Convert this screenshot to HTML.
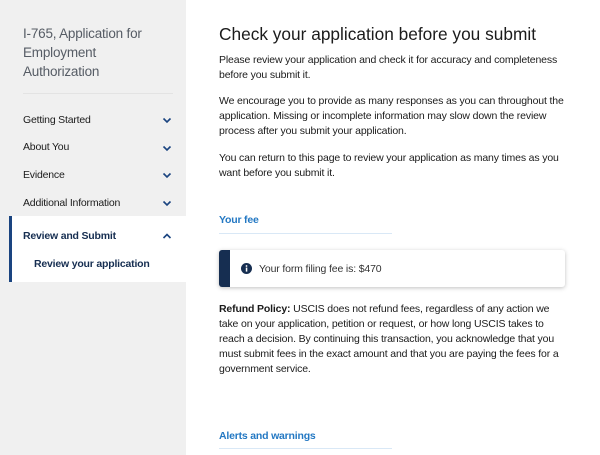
<!DOCTYPE html>
<html><head><style>
*{margin:0;padding:0;box-sizing:border-box}
body{width:600px;height:455px;overflow:hidden;background:#fff;font-family:"Liberation Sans",sans-serif;color:#1b1b1b;position:relative}
.side{position:absolute;left:0;top:0;width:186px;height:455px;background:#f0f0f0}
.t{position:absolute;white-space:nowrap}
.title{left:23px;font-size:13.5px;color:#565c65;letter-spacing:-0.2px}
.nav{left:23px;font-size:10.5px;color:#1b1b1b;letter-spacing:-0.2px}
.chev{position:absolute;left:162px;width:10px;height:7px}
.active{position:absolute;left:9px;top:216px;width:177px;height:66px;background:#fff;border-left:3px solid #1a4480}
.p{left:219px;font-size:10.5px;color:#1b1b1b;letter-spacing:-0.15px}
.h{left:219px;font-size:17.3px;color:#1b1b1b;letter-spacing:0}
.sec{left:219px;font-size:10.5px;font-weight:bold;color:#2378c3;letter-spacing:-0.2px}
.rule{position:absolute;left:219px;width:173px;height:1px;background:#d9e8f6}
.alert{position:absolute;left:219px;top:250px;width:346px;height:37px;background:#fff;border-radius:3px;box-shadow:0 1px 4px rgba(0,0,0,.25);border-left:11px solid #162e51}
</style></head><body>
<div class="side"></div>
<div class="t title" style="top:26px">I-765, Application for</div>
<div class="t title" style="top:45px">Employment</div>
<div class="t title" style="top:64px">Authorization</div>
<div style="position:absolute;left:23px;top:93px;width:150px;height:1px;background:#e3e3e3"></div>
<div class="t nav" style="top:114px">Getting Started</div>
<div class="t nav" style="top:141px">About You</div>
<div class="t nav" style="top:169px">Evidence</div>
<div class="t nav" style="top:197px">Additional Information</div>
<svg class="chev" style="top:117px" viewBox="0 0 10 7"><path d="M1.5 1.5 5 5 8.5 1.5" fill="none" stroke="#1a4480" stroke-width="1.6"/></svg>
<svg class="chev" style="top:145px" viewBox="0 0 10 7"><path d="M1.5 1.5 5 5 8.5 1.5" fill="none" stroke="#1a4480" stroke-width="1.6"/></svg>
<svg class="chev" style="top:172px" viewBox="0 0 10 7"><path d="M1.5 1.5 5 5 8.5 1.5" fill="none" stroke="#1a4480" stroke-width="1.6"/></svg>
<svg class="chev" style="top:200px" viewBox="0 0 10 7"><path d="M1.5 1.5 5 5 8.5 1.5" fill="none" stroke="#1a4480" stroke-width="1.6"/></svg>
<div class="active"></div>
<div class="t nav" style="top:230px;font-weight:bold;color:#162e51">Review and Submit</div>
<svg class="chev" style="top:233px" viewBox="0 0 10 7"><path d="M1.5 5 5 1.5 8.5 5" fill="none" stroke="#1a4480" stroke-width="1.6"/></svg>
<div class="t nav" style="left:34px;top:258px;font-weight:bold;color:#162e51">Review your application</div>

<div class="t h" style="top:24px">Check your application before you submit</div>
<div class="t p" style="top:54px">Please review your application and check it for accuracy and completeness</div>
<div class="t p" style="top:69px">before you submit it.</div>
<div class="t p" style="top:95px">We encourage you to provide as many responses as you can throughout the</div>
<div class="t p" style="top:110px">application. Missing or incomplete information may slow down the review</div>
<div class="t p" style="top:125px">process after you submit your application.</div>
<div class="t p" style="top:152px">You can return to this page to review your application as many times as you</div>
<div class="t p" style="top:167px">want before you submit it.</div>

<div class="t sec" style="top:214px">Your fee</div>
<div class="rule" style="top:233px"></div>
<div class="alert"></div>
<svg style="position:absolute;left:241px;top:263px" width="11" height="11" viewBox="0 0 11 11"><circle cx="5.5" cy="5.5" r="5.5" fill="#162e51"/><rect x="4.8" y="4.6" width="1.5" height="4" fill="#fff"/><circle cx="5.5" cy="3" r=".9" fill="#fff"/></svg>
<div class="t p" style="left:259px;top:263px;color:#333">Your form filing fee is: $470</div>

<div class="t p" style="top:303px"><b>Refund Policy:</b> USCIS does not refund fees, regardless of any action we</div>
<div class="t p" style="top:318px">take on your application, petition or request, or how long USCIS takes to</div>
<div class="t p" style="top:333px">reach a decision. By continuing this transaction, you acknowledge that you</div>
<div class="t p" style="top:348px">must submit fees in the exact amount and that you are paying the fees for a</div>
<div class="t p" style="top:363px">government service.</div>

<div class="t sec" style="top:430px">Alerts and warnings</div>
<div class="rule" style="top:448px"></div>
</body></html>
